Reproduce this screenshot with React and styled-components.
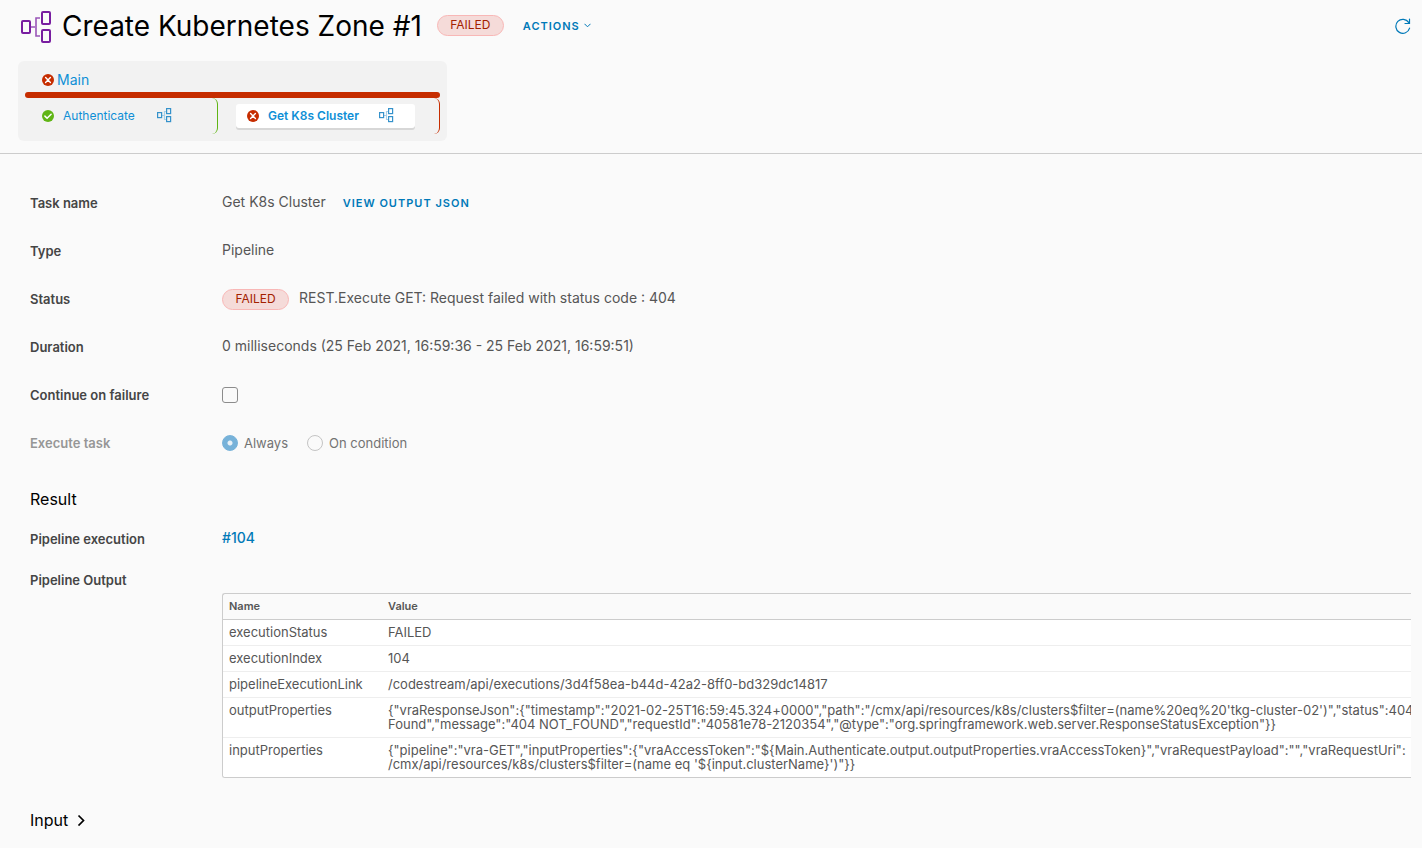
import React from "react";
import styled, { createGlobalStyle } from "styled-components";

const GlobalStyle = createGlobalStyle`
  * { box-sizing: border-box; }
  body {
    margin: 0;
    background: #fafafa;
    color: #565656;
    font-family: Inter, "Liberation Sans", sans-serif;
    font-size: 13px;
    line-height: 24px;
  }
  button { font-family: inherit; border: 0; background: none; padding: 0; cursor: pointer; }
  a { text-decoration: none; }
`;

const Header = styled.header`
  padding: 8px 11px 12px 18px;
  border-bottom: 1px solid #ccc;
`;

const TitleBar = styled.div`
  display: flex;
  align-items: center;
  height: 35px;
`;

const Title = styled.h1`
  margin: 0 15px 0 9px;
  font-size: 28px;
  line-height: 34px;
  font-weight: 400;
  color: #000;
`;

const Badge = styled.span`
  display: inline-flex;
  flex: none;
  justify-content: center;
  width: 67px;
  height: 21px;
  border: 1px solid #f8b7b6;
  border-radius: 11px;
  background: #f5dbd9;
  color: #a32100;
  font-size: 12px;
  line-height: 18px;
`;

const TextButton = styled.button`
  display: inline-flex;
  align-items: center;
  gap: 4px;
  margin-left: ${(p) => p.$gap}px;
  color: #0079b8;
  font-size: 11px;
  line-height: 24px;
  font-weight: 600;
  letter-spacing: 1px;
  text-transform: uppercase;
`;

const RefreshButton = styled.button`
  display: flex;
  margin-left: auto;
`;

const StageCard = styled.section`
  width: fit-content;
  margin-top: 18px;
  padding: 7px;
  border-radius: 6px;
  background: #f2f2f2;
`;

const StageLink = styled.a`
  display: flex;
  align-items: center;
  gap: 3px;
  height: 24px;
  padding-left: 17px;
  color: #0e8fd6;
  font-size: 14px;
`;

const StageBar = styled.div`
  height: 6px;
  border-radius: 3px;
  background: #c62d00;
`;

const TaskList = styled.div`
  display: flex;
`;

const TaskCell = styled.div`
  display: flex;
  align-items: center;
  height: 36px;
  padding: 0 24px 0 ${(p) => p.$start}px;
  border-right: 1px solid ${(p) => p.$color};
  border-radius: 0 6px 6px 0;
`;

const TaskLink = styled.a`
  display: flex;
  align-items: center;
  height: 24px;
  padding: 0 21px 0 11px;
  border-radius: 3px;
  color: #0e8fd6;
  font-size: 12px;
  font-weight: ${(p) => (p.$selected ? 600 : 400)};
  background: ${(p) => (p.$selected ? "#fff" : "transparent")};
  box-shadow: ${(p) => (p.$selected ? "0 2px 0 #d7d7d7" : "none")};
`;

const TaskLabel = styled.span`
  min-width: 74px;
  margin: 0 20px 0 9px;
`;

const Content = styled.main`
  padding: 25px 11px 16px 30px;
`;

const Row = styled.div`
  display: flex;
  align-items: center;
  min-height: ${(p) => p.$height}px;
`;

const RowLabel = styled.label`
  flex: none;
  width: 192px;
  padding-bottom: 1px;
  color: #454545;
  font-weight: 600;
  opacity: ${(p) => (p.$disabled ? 0.55 : 1)};
`;

const Value = styled.span`
  padding-bottom: 2px;
  font-size: 14px;
  margin-left: ${(p) => p.$gap || 0}px;
`;

const Checkbox = styled.input`
  appearance: none;
  width: 16px;
  height: 16px;
  margin: 0;
  border: 1px solid #8c8c8c;
  border-radius: 3px;
`;

const RadioLabel = styled.label`
  display: flex;
  align-items: center;
  gap: 6px;
  margin-right: 19px;
  color: #737373;
`;

const Radio = styled.input`
  appearance: none;
  width: 16px;
  height: 16px;
  margin: 0;
  border: 1px solid #c4c4c4;
  border-radius: 50%;
  &:checked {
    border-color: #77b2d9;
    background: radial-gradient(circle, #e8f1f7 0 2px, #77b2d9 3px);
  }
`;

const SectionTitle = styled.h2`
  margin: 0;
  padding-top: ${(p) => p.$top}px;
  color: #000;
  font-size: 16px;
  line-height: 24px;
  font-weight: 400;
`;

const ExecutionLink = styled.a`
  padding-bottom: 2px;
  color: #0079b8;
  font-size: 14px;
  font-weight: 500;
`;

const ExpandButton = styled.button`
  display: flex;
  align-items: center;
  gap: 9px;
  color: inherit;
  font-size: inherit;
  line-height: inherit;
`;

const TableFrame = styled.div`
  margin-left: 192px;
  overflow: hidden;
  border: 1px solid #ccc;
  border-right: 0;
  border-radius: 3px 0 0 3px;
`;

const Table = styled.table`
  width: 100%;
  border-collapse: separate;
  border-spacing: 0;
  table-layout: fixed;
  line-height: 14px;
  font-feature-settings: "calt" 0;
  white-space: nowrap;
  th, td {
    padding: 5px 0 6px 6px;
    text-align: left;
    vertical-align: top;
  }
  th { font-size: 11px; font-weight: 600; border-bottom: 1px solid #ccc; }
  th:first-child { width: 159px; }
  td { background: #fff; border-bottom: 1px solid #eee; }
  tr:last-child td { border-bottom: 0; }
`;

const Line = styled.div`
  height: 14px;
`;

const PipelineIcon = () => (
  <svg width="35" height="36" viewBox="0 0 35 36" fill="none" stroke="#781da0" strokeWidth="2" aria-hidden="true">
    <rect x="4" y="13" width="8" height="12" rx="1" />
    <rect x="24" y="4" width="8" height="12" rx="1" />
    <rect x="24" y="22" width="8" height="12" rx="1" />
    <path d="M13 19h4M22 10h-4v18h4" strokeWidth="1.6" opacity="0.75" />
  </svg>
);

const TaskTypeIcon = () => (
  <svg width="15" height="16" viewBox="0 0 15 16" fill="none" stroke="#3592cb" strokeWidth="1.2" aria-hidden="true">
    <path d="M5 7.5h2M9 3.5h-1.5v8h1.5" stroke="#a6cfe8" />
    <rect x="0.6" y="4.6" width="4" height="5" />
    <rect x="9.6" y="0.6" width="4" height="5" />
    <rect x="9.6" y="8.6" width="4" height="5" />
  </svg>
);

const FailedIcon = () => (
  <svg width="12" height="12" viewBox="0 0 12 12" aria-hidden="true">
    <circle cx="6" cy="6" r="6" fill="#c62d00" />
    <path d="M3.6 3.6l4.8 4.8M8.4 3.6L3.6 8.4" stroke="#fff" strokeWidth="1.4" strokeLinecap="round" />
  </svg>
);

const PassedIcon = () => (
  <svg width="12" height="12" viewBox="0 0 12 12" aria-hidden="true">
    <circle cx="6" cy="6" r="6" fill="#60b515" />
    <path d="M2.9 6.1l2.2 2.2 4-4" fill="none" stroke="#fff" strokeWidth="1.5" strokeLinecap="round" />
  </svg>
);

const RefreshIcon = () => (
  <svg width="16" height="18" viewBox="0 0 16 18" fill="none" stroke="#0079b8" strokeWidth="1.2" strokeLinecap="round" aria-hidden="true">
    <path d="M14.6 11.2A7 7 0 1 1 13.8 5.6M14.5 2v4.5H10" />
  </svg>
);

const outputs = [
  ["executionStatus", ["FAILED"]],
  ["executionIndex", ["104"]],
  ["pipelineExecutionLink", ["/codestream/api/executions/3d4f58ea-b44d-42a2-8ff0-bd329dc14817"]],
  ["outputProperties", [
    `{"vraResponseJson":{"timestamp":"2021-02-25T16:59:45.324+0000","path":"/cmx/api/resources/k8s/clusters$filter=(name%20eq%20'tkg-cluster-02')","status":404,"`,
    `Found","message":"404 NOT_FOUND","requestId":"40581e78-2120354","@type":"org.springframework.web.server.ResponseStatusException"}}`,
  ]],
  ["inputProperties", [
    `{"pipeline":"vra-GET","inputProperties":{"vraAccessToken":"\${Main.Authenticate.output.outputProperties.vraAccessToken}","vraRequestPayload":"","vraRequestUri":`,
    `/cmx/api/resources/k8s/clusters$filter=(name eq '\${input.clusterName}')"}}`,
  ]],
];

export default function App() {
  return (
    <>
      <GlobalStyle />
      <Header>
        <TitleBar>
          <PipelineIcon />
          <Title>Create Kubernetes Zone #1</Title>
          <Badge>FAILED</Badge>
          <TextButton $gap={19}>
            Actions
            <svg width="7" height="5" viewBox="0 0 7 5" fill="none" stroke="currentColor" aria-hidden="true">
              <path d="M0.5 0.8l3 3 3-3" />
            </svg>
          </TextButton>
          <RefreshButton aria-label="Refresh"><RefreshIcon /></RefreshButton>
        </TitleBar>
        <StageCard>
          <StageLink href="#main"><FailedIcon />Main</StageLink>
          <StageBar />
          <TaskList>
            <TaskCell $start={6} $color="#60b515">
              <TaskLink href="#authenticate">
                <PassedIcon />
                <TaskLabel>Authenticate</TaskLabel>
                <TaskTypeIcon />
              </TaskLink>
            </TaskCell>
            <TaskCell $start={18} $color="#c62d00">
              <TaskLink href="#get-cluster" $selected>
                <FailedIcon />
                <TaskLabel>Get K8s Cluster</TaskLabel>
                <TaskTypeIcon />
              </TaskLink>
            </TaskCell>
          </TaskList>
        </StageCard>
      </Header>
      <Content>
        <Row $height={48}>
          <RowLabel as="span">Task name</RowLabel>
          <Value>Get K8s Cluster</Value>
          <TextButton $gap={17}>View output JSON</TextButton>
        </Row>
        <Row $height={48}>
          <RowLabel as="span">Type</RowLabel>
          <Value>Pipeline</Value>
        </Row>
        <Row $height={48}>
          <RowLabel as="span">Status</RowLabel>
          <Badge>FAILED</Badge>
          <Value $gap={10}>REST.Execute GET: Request failed with status code : 404</Value>
        </Row>
        <Row $height={48}>
          <RowLabel as="span">Duration</RowLabel>
          <Value>0 milliseconds (25 Feb 2021, 16:59:36 - 25 Feb 2021, 16:59:51)</Value>
        </Row>
        <Row $height={48}>
          <RowLabel htmlFor="continue">Continue on failure</RowLabel>
          <Checkbox id="continue" type="checkbox" />
        </Row>
        <Row $height={48} role="radiogroup" aria-labelledby="execute">
          <RowLabel as="span" id="execute" $disabled>Execute task</RowLabel>
          <RadioLabel><Radio type="radio" name="execute" defaultChecked disabled />Always</RadioLabel>
          <RadioLabel><Radio type="radio" name="execute" disabled />On condition</RadioLabel>
        </Row>
        <SectionTitle $top={20}>Result</SectionTitle>
        <Row $height={56}>
          <RowLabel as="span">Pipeline execution</RowLabel>
          <ExecutionLink href="#104">#104</ExecutionLink>
        </Row>
        <Row $height={26}>
          <RowLabel as="span">Pipeline Output</RowLabel>
        </Row>
        <TableFrame>
          <Table>
            <thead>
              <tr><th>Name</th><th>Value</th></tr>
            </thead>
            <tbody>
              {outputs.map(([name, lines]) => (
                <tr key={name}>
                  <td>{name}</td>
                  <td>{lines.map((line) => <Line key={line}>{line}</Line>)}</td>
                </tr>
              ))}
            </tbody>
          </Table>
        </TableFrame>
        <SectionTitle $top={30}>
          <ExpandButton aria-expanded="false">
            Input
            <svg width="9" height="12" viewBox="0 0 9 12" fill="none" stroke="#000" strokeWidth="1.7" aria-hidden="true">
              <path d="M1.5 1.5L6.5 6.5l-5 5" />
            </svg>
          </ExpandButton>
        </SectionTitle>
      </Content>
    </>
  );
}
